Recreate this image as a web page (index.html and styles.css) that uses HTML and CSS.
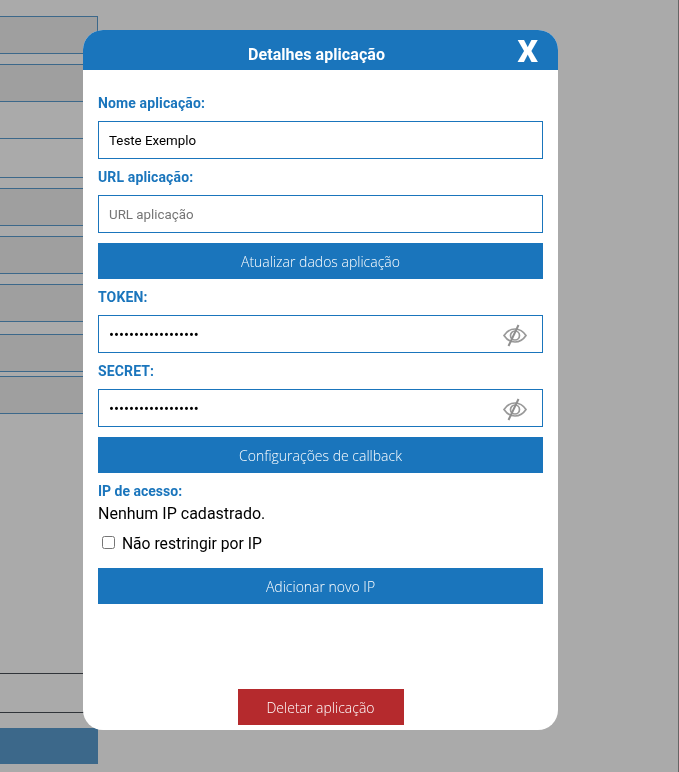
FILE: index.html
```html
<!doctype html>
<html lang="pt-BR">

<head>
    <meta charset="UTF-8">
    <meta name="viewport" content="width=device-width, initial-scale=1.0">
    <title>Detalhes aplicação</title>
    <link rel="stylesheet" href="styles.css">
</head>

<body>
    <!-- lista de aplicações atrás do modal -->
    <div class="app-list">
        <div class="app-row first"></div>
        <div class="app-row"></div>
        <div class="app-row light tall gap-large"></div>
        <div class="app-row"></div>
        <div class="app-row"></div>
        <div class="app-row"></div>
        <div class="app-row gap-12"></div>
        <div class="app-row gap-4"></div>
        <div class="app-row light tall dark-line gap-bottom"></div>
        <div class="app-new"></div>
    </div>

    <div class="overlay"></div>

    <div class="modal">
        <div class="modal-header">
            <span class="modal-title">Detalhes aplicação</span>
            <span class="modal-close">X</span>
        </div>
        <form class="modal-body">
            <label class="field-label" for="nome">Nome aplicação:</label>
            <input class="field" type="text" id="nome" value="Teste Exemplo" placeholder="Nome aplicação">

            <label class="field-label" for="url">URL aplicação:</label>
            <input class="field" type="text" id="url" placeholder="URL aplicação">

            <button type="button" class="btn">Atualizar dados aplicação</button>

            <label class="field-label" for="token">TOKEN:</label>
            <div class="secret-field">
                <input class="field field-secret" type="password" id="token" value="123456789012345678">
                <svg class="eye-icon" viewBox="0 0 24 24" width="24" height="24">
                    <path d="M1 11.5C4 7 8 5 12 5s8 2 11 6.500C20 16 16 18 12 18S4 16 1 11.500Z" />
                    <circle cx="12" cy="11.500" r="4.500" />
                    <path class="eye-slash" d="M15.500 1 5.500 22" />
                </svg>
            </div>

            <label class="field-label" for="secret">SECRET:</label>
            <div class="secret-field">
                <input class="field field-secret" type="password" id="secret" value="123456789012345678">
                <svg class="eye-icon" viewBox="0 0 24 24" width="24" height="24">
                    <path d="M1 11.5C4 7 8 5 12 5s8 2 11 6.500C20 16 16 18 12 18S4 16 1 11.500Z" />
                    <circle cx="12" cy="11.500" r="4.500" />
                    <path class="eye-slash" d="M15.500 1 5.500 22" />
                </svg>
            </div>

            <button type="button" class="btn">Configurações de callback</button>

            <div class="ip-label">IP de acesso:</div>
            <div class="ip-empty">Nenhum IP cadastrado.</div>
            <label class="ip-check"><input type="checkbox"> Não restringir por IP</label>

            <button type="button" class="btn">Adicionar novo IP</button>

            <button type="button" class="btn btn-delete">Deletar aplicação</button>
        </form>
    </div>
</body>

</html>
```

FILE: styles.css
```css
* {
    box-sizing: border-box;
}

body {
    margin: 0;
    min-height: 100vh;
    background: #fff;
    border-right: 1px solid #707070;
    font-family: 'Roboto', sans-serif;
}

.app-list {
    width: 98px;
}

.app-row {
    height: 38px;
    margin-top: 10px;
    background: #e9e9e9;
    border-top: 1px solid #1a75bc;
    border-bottom: 1px solid #1a75bc;
    border-right: 1px solid #1a75bc;
}

.app-row.first {
    margin-top: 16px;
}

.app-row.light {
    background: #fff;
}

.app-row.tall {
    height: 40px;
}

.app-row.dark-line {
    border-color: #000a14;
}

.app-row.gap-large {
    margin-top: 36px;
}

.app-row.gap-12 {
    margin-top: 12px;
}

.app-row.gap-4 {
    margin-top: 4px;
}

.app-row.gap-bottom {
    margin-top: 259px;
}

.app-new {
    height: 36px;
    margin-top: 15px;
    background: #1a75bc;
}

.overlay {
    position: fixed;
    top: 0;
    right: 0;
    bottom: 0;
    left: 0;
    background: rgba(92, 92, 92, 0.52);
}

.modal {
    position: fixed;
    top: 30px;
    left: 83px;
    width: 475px;
    height: 700px;
    background: #fff;
    border-radius: 20px;
    display: flex;
    flex-direction: column;
}

.modal-header {
    height: 40px;
    flex: none;
    background: #1a75bc;
    border-radius: 20px 20px 0 0;
    color: #fff;
    display: flex;
    align-items: center;
    justify-content: space-between;
    padding: 0 20px 0 165px;
}

.modal-title {
    font-size: 16px;
    font-weight: 700;
    letter-spacing: 0.06px;
    padding-top: 9px;
    line-height: 31px;
}

.modal-close {
    font-size: 32px;
    font-weight: 900;
    line-height: 40px;
    padding-top: 1px;
}

.modal-body {
    flex: 1;
    display: flex;
    flex-direction: column;
    padding: 15px 15px 5px 15px;
}

.field-label {
    display: block;
    height: 36px;
    line-height: 36px;
    font-size: 14px;
    font-weight: 700;
    letter-spacing: 0.13px;
    color: #1a75bc;
}

.field {
    display: block;
    width: 100%;
    height: 38px;
    padding: 0 10px;
    border: 1px solid #1a75bc;
    border-radius: 0;
    background: #fff;
    color: #000;
    font-family: 'Roboto', sans-serif;
    font-size: 13.33px;
    outline: none;
}

.field-secret {
    font-size: 14.8px;
    padding-top: 1px;
}

.secret-field {
    position: relative;
}

.eye-icon {
    position: absolute;
    top: 9px;
    right: 16px;
    fill: none;
    stroke: #999;
    stroke-width: 1.7;
}

.eye-slash {
    stroke: #8e8e8e;
    stroke-width: 2;
}

.btn {
    display: block;
    flex: none;
    width: 100%;
    height: 36px;
    margin-top: 10px;
    border: none;
    border-radius: 0;
    background: #1a75bc;
    color: #fff;
    font-family: 'Open Sans', sans-serif;
    font-size: 14px;
    font-weight: 300;
    cursor: pointer;
}

.btn-delete {
    width: 166px;
    margin-top: auto;
    align-self: center;
    background: #b52a2d;
}

.ip-label {
    margin-top: 10px;
    line-height: 16px;
    font-size: 14px;
    font-weight: 700;
    color: #1a75bc;
}

.ip-empty {
    margin-top: 5px;
    line-height: 19px;
    font-size: 16px;
    color: #000;
}

.ip-check {
    display: block;
    margin-top: 10px;
    margin-bottom: 5px;
    line-height: 19px;
    font-size: 15.7px;
    color: #000;
}
```
